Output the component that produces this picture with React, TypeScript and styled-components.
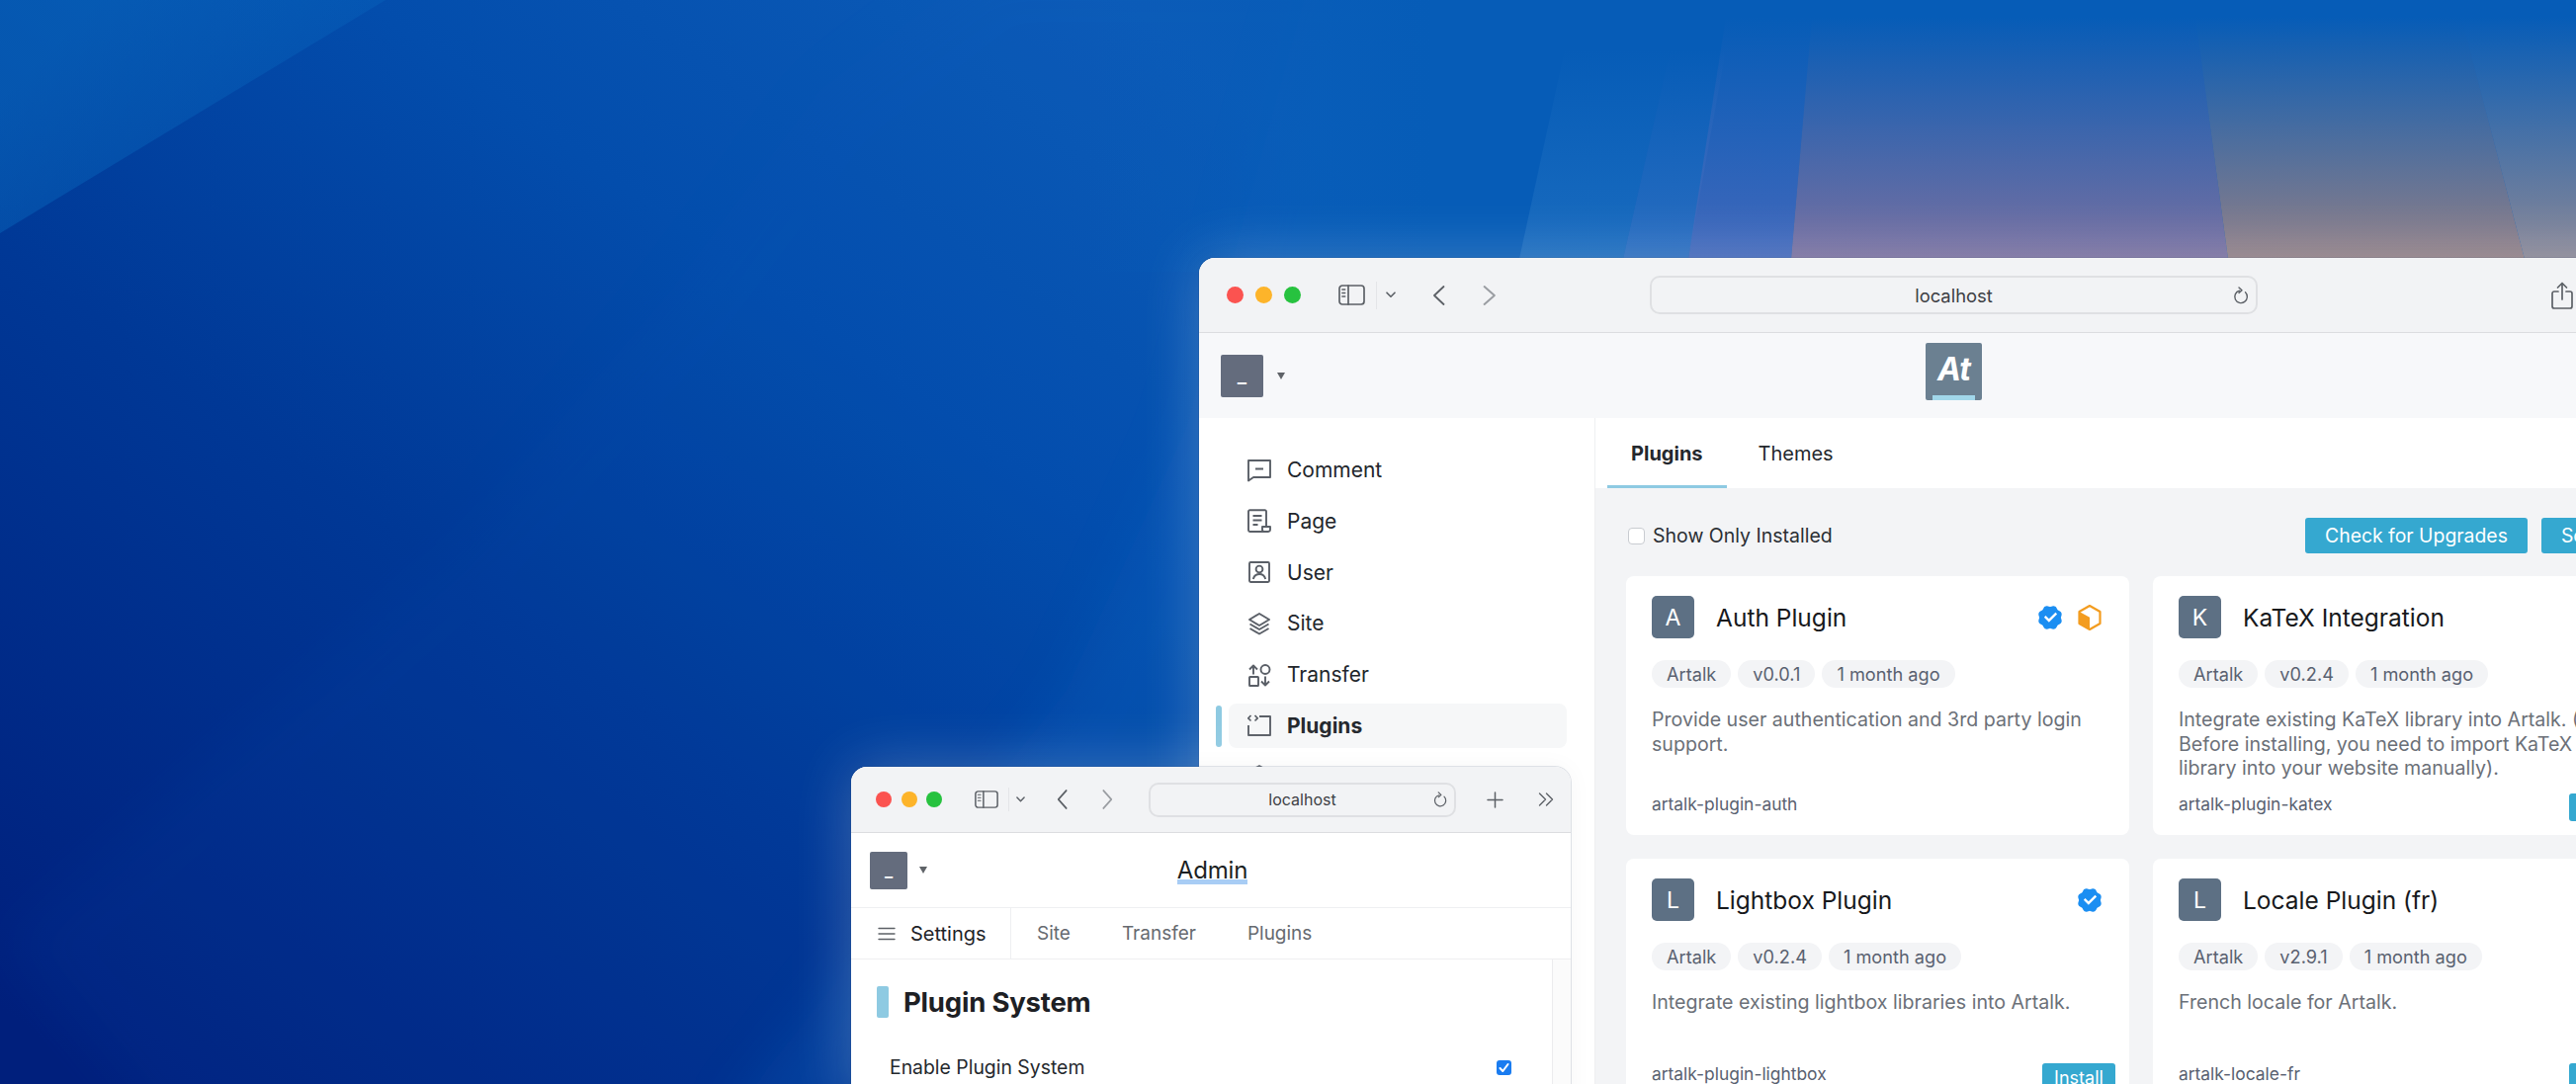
import React from 'react';
import styled, { createGlobalStyle } from 'styled-components';
import { RiVerifiedBadgeFill } from 'react-icons/ri';

const Global = createGlobalStyle`
  html, body { margin: 0; padding: 0; overflow: hidden; background: #0a50ae; }
  * { box-sizing: border-box; }
  body { font-family: Inter, "Noto Sans", "Liberation Sans", sans-serif; color: #1f2328; }
`;

const Desktop = styled.div`
  position: relative;
  width: 2606px;
  height: 1097px;
  overflow: hidden;
`;
const Wallpaper = styled.svg`
  position: absolute;
  inset: 0;
`;
const Win = styled.section<{ $x: number; $y: number; $w: number; $h: number }>`
  position: absolute;
  left: ${p => p.$x}px;
  top: ${p => p.$y}px;
  width: ${p => p.$w}px;
  height: ${p => p.$h}px;
  background: #fff;
  border-radius: 16px 16px 0 0;
  overflow: hidden;
  display: flex;
  flex-direction: column;
  box-shadow: 0 0 0 1px rgba(20, 40, 80, .12), 0 0 60px rgba(255, 255, 255, .24), 0 0 24px rgba(0, 0, 0, .04);
`;
const Toolbar = styled.header<{ $h: number; $pl: number }>`
  height: ${p => p.$h}px;
  padding-left: ${p => p.$pl}px;
  flex: none;
  display: flex;
  align-items: center;
  background: #f2f3f5;
  border-bottom: 1px solid #dcdde0;
`;
const Dots = styled.div<{ $gap: number }>`
  display: flex;
  gap: ${p => p.$gap}px;
`;
const Dot = styled.i<{ $c: string; $d: number }>`
  display: block;
  width: ${p => p.$d}px;
  height: ${p => p.$d}px;
  border-radius: 50%;
  background: ${p => p.$c};
`;
const ToolIcon = styled.svg<{ $ml: number }>`
  flex: none;
  margin-left: ${p => p.$ml}px;
  fill: none;
  stroke: #5c6066;
  stroke-linecap: round;
  stroke-linejoin: round;
`;
const ToolSep = styled.i<{ $ml: number; $h: number }>`
  flex: none;
  width: 1px;
  height: ${p => p.$h}px;
  margin-left: ${p => p.$ml}px;
  background: #e4e5e8;
`;
const UrlBar = styled.div<{ $ml: number; $w: number; $h: number; $fs: number; $pr: number }>`
  position: relative;
  flex: none;
  margin-left: ${p => p.$ml}px;
  width: ${p => p.$w}px;
  height: ${p => p.$h}px;
  padding-right: ${p => p.$pr}px;
  display: flex;
  align-items: center;
  justify-content: flex-end;
  border: 2px solid #dfe0e3;
  border-radius: 10px;
  background: #f2f3f5;
  font-size: ${p => p.$fs}px;
  color: #3d4044;
`;
const UrlText = styled.span`
  position: absolute;
  left: 0;
  right: 0;
  text-align: center;
`;
const BigHeader = styled.div`
  height: 86px;
  flex: none;
  display: grid;
  grid-template-columns: 1fr auto 1fr;
  align-items: center;
  padding: 0 24px 0 22px;
  background: #f7f8fa;
`;
const SmallHeader = styled.div`
  height: 76px;
  flex: none;
  display: grid;
  grid-template-columns: 1fr auto 1fr;
  align-items: center;
  padding-left: 19px;
  padding-right: 16px;
  border-bottom: 1px solid #eeeff1;
`;
const UserBox = styled.div`
  display: flex;
  align-items: center;
`;
const UserAvatar = styled.div<{ $s: number }>`
  width: ${p => p.$s}px;
  height: ${p => p.$s}px;
  border-radius: 2px;
  background: #646c7d;
  color: #fff;
  font-size: ${p => p.$s * 0.46}px;
  font-weight: 600;
  display: flex;
  align-items: center;
  justify-content: center;
`;
const Caret = styled.span<{ $ml: number }>`
  margin-left: ${p => p.$ml}px;
  width: 0;
  height: 0;
  border-left: 4px solid transparent;
  border-right: 4px solid transparent;
  border-top: 7px solid #5f6368;
`;
const Logo = styled.div`
  position: relative;
  width: 57px;
  height: 58px;
  margin-bottom: 8px;
  border-radius: 2px;
  background: #6b8091;
  color: #fff;
  font-size: 32px;
  font-weight: 700;
  font-style: italic;
  letter-spacing: -1px;
  display: flex;
  align-items: center;
  justify-content: center;
  padding-bottom: 5px;
  &::after {
    content: '';
    position: absolute;
    left: 7px;
    right: 7px;
    bottom: 0;
    height: 5px;
    background: #a1d7ea;
  }
`;
const AdminTitle = styled.h1`
  margin: 0;
  font-size: 24px;
  font-weight: 400;
  line-height: 30px;
  letter-spacing: -.2px;
  color: #1c1f23;
  background: linear-gradient(#a8cdf5, #a8cdf5) 0 24px / 100% 5px no-repeat;
`;
const Body = styled.div`
  flex: 1;
  min-height: 0;
  display: flex;
`;
const Sidebar = styled.nav`
  width: 401px;
  flex: none;
  padding: 30px 0 0 30px;
  display: flex;
  flex-direction: column;
  gap: 6.8px;
  border-right: 1px solid #eeeff1;
`;
const NavRow = styled.a<{ $on?: boolean }>`
  position: relative;
  width: 342px;
  height: 45px;
  padding-left: 19px;
  display: flex;
  align-items: center;
  gap: 16px;
  flex: none;
  border-radius: 8px;
  font-size: 21px;
  font-weight: ${p => (p.$on ? 700 : 400)};
  color: #22262b;
  background: ${p => (p.$on ? '#f6f7f8' : 'transparent')};
  ${p => p.$on && `
    &::before {
      content: '';
      position: absolute;
      left: -13px;
      top: 2px;
      width: 6px;
      height: 42px;
      border-radius: 3px;
      background: #8ecae2;
    }
  `}
`;
const NavIcon = styled.svg`
  width: 24px;
  height: 24px;
  flex: none;
  fill: none;
  stroke: #5a5f67;
  stroke-width: 1.9;
  stroke-linejoin: round;
`;
const Main = styled.main`
  flex: 1;
  background: #f3f4f6;
  min-width: 0;
`;
const TabBar = styled.div`
  height: 71px;
  padding-left: 12px;
  display: flex;
  gap: 8px;
  background: #fff;
`;
const Tab = styled.a<{ $on?: boolean }>`
  padding: 3px 24px 0;
  display: flex;
  align-items: center;
  font-size: 20px;
  font-weight: ${p => (p.$on ? 700 : 400)};
  color: #24282d;
  border-bottom: 3px solid ${p => (p.$on ? '#8ecae2' : 'transparent')};
`;
const FilterRow = styled.div`
  margin-top: 30px;
  padding-left: 33px;
  height: 36px;
  display: flex;
  align-items: center;
`;
const CheckBox = styled.i`
  flex: none;
  width: 17px;
  height: 17px;
  border: 1.5px solid #c9ccd1;
  border-radius: 4px;
  background: #fff;
`;
const FilterLabel = styled.label`
  width: 181px;
  margin-left: 8px;
  font-size: 19.5px;
  color: #2a2e33;
  white-space: nowrap;
`;
const Btn = styled.button<{ $ml?: number }>`
  flex: none;
  margin-left: ${p => p.$ml ?? 0}px;
  height: 36px;
  padding: 0 20px;
  border: 0;
  border-radius: 3px;
  background: #35a8d0;
  color: #fff;
  font: 400 19.4px Inter, sans-serif;
  white-space: nowrap;
`;
const Grid = styled.div`
  margin-top: 23px;
  padding-left: 31px;
  display: grid;
  grid-template-columns: 509px 509px;
  grid-template-rows: 262px 249px;
  gap: 24px;
`;
const Card = styled.article`
  padding: 20px 14px 14px 26px;
  display: flex;
  flex-direction: column;
  background: #fff;
  border-radius: 8px;
`;
const CardHead = styled.div`
  height: 43px;
  padding-right: 14px;
  display: flex;
  align-items: center;
`;
const Letter = styled.div`
  width: 43px;
  height: 43px;
  flex: none;
  border-radius: 5px;
  background: #5d7084;
  color: #fff;
  font-size: 23px;
  display: flex;
  align-items: center;
  justify-content: center;
`;
const CardTitle = styled.h3`
  margin: 0 0 0 22px;
  font-size: 24.5px;
  font-weight: 400;
  color: #17191c;
  white-space: nowrap;
`;
const Badges = styled.div`
  margin-left: auto;
  display: flex;
  align-items: center;
  gap: 16px;
`;
const Verified = styled(RiVerifiedBadgeFill)`
  width: 28px;
  height: 28px;
  color: #1b8ef2;
  margin: 0 -2px;
  display: block;
`;
const Pills = styled.div`
  margin-top: 22px;
  display: flex;
  gap: 7px;
`;
const Pill = styled.span`
  height: 28px;
  padding: 0 15px;
  border-radius: 14px;
  background: #f3f4f6;
  color: #596170;
  font-size: 18.2px;
  line-height: 28px;
  white-space: nowrap;
`;
const Desc = styled.p`
  margin: 20px 0 0;
  padding-right: 20px;
  font-size: 19.6px;
  line-height: 24.5px;
  color: #6b7078;
`;
const CardFoot = styled.div`
  margin-top: auto;
  height: 28px;
  display: flex;
  justify-content: space-between;
  align-items: flex-start;
`;
const Slug = styled.span`
  font-size: 17.4px;
  line-height: 22px;
  color: #596170;
`;
const Install = styled.button`
  width: 74px;
  height: 28px;
  padding: 0;
  border: 0;
  border-radius: 3px;
  background: #35a8d0;
  color: #fff;
  font: 400 18px Inter, sans-serif;
`;
const SmallTabs = styled.div`
  height: 52px;
  flex: none;
  display: flex;
  align-items: center;
  border-bottom: 1px solid #eeeff1;
  font-size: 19px;
`;
const MenuCell = styled.div`
  width: 162px;
  height: 100%;
  padding-left: 27px;
  display: flex;
  align-items: center;
  gap: 15px;
  flex: none;
  border-right: 1px solid #eeeff1;
  color: #1f2328;
  font-size: 20px;
`;
const SmallTabLinks = styled.div`
  margin-left: 26px;
  display: flex;
  gap: 52px;
  color: #666a70;
`;
const Panel = styled.div`
  flex: 1;
  padding: 26px 41px 0 26px;
`;
const PanelTitle = styled.div`
  display: flex;
  align-items: center;
  gap: 15px;
`;
const TitleBar = styled.i`
  width: 12px;
  height: 32px;
  border-radius: 2px;
  background: #8ecae2;
`;
const TitleText = styled.h2`
  margin: 0;
  font-size: 27.5px;
  font-weight: 700;
  letter-spacing: -.2px;
  color: #1d2024;
`;
const SettingRow = styled.div`
  margin-top: 34px;
  height: 30px;
  padding-left: 13px;
  display: flex;
  align-items: center;
  justify-content: space-between;
  font-size: 19.4px;
  color: #24282d;
`;
const Checked = styled.i`
  width: 15px;
  height: 15px;
  border-radius: 3px;
  background: #1a7cf0;
  display: flex;
  align-items: center;
  justify-content: center;
`;
const ScrollTrack = styled.div`
  width: 19px;
  flex: none;
  background: #fbfbfb;
  border-left: 1px solid #ececee;
`;

const SidebarGlyph = ({ ml, w, h }: { ml: number; w: number; h: number }) => (
  <ToolIcon $ml={ml} width={w} height={h} viewBox="0 0 27 21" preserveAspectRatio="none" strokeWidth={1.7}>
    <rect x="1" y="1" width="25" height="19" rx="3" />
    <path d="M10 1v19" />
    <path d="M3.8 5h3M3.8 8.5h3M3.8 12h3" strokeWidth={1.3} />
  </ToolIcon>
);
const Chevron = ({ ml, w }: { ml: number; w: number }) => (
  <ToolIcon $ml={ml} width={w} height={w * 0.7} viewBox="0 0 10 7" strokeWidth={1.6}>
    <path d="M1 1.2l4 4 4-4" />
  </ToolIcon>
);
const Back = ({ ml, w, h }: { ml: number; w: number; h: number }) => (
  <ToolIcon $ml={ml} width={w} height={h} viewBox="0 0 13 20" preserveAspectRatio="none" strokeWidth={1.8}>
    <path d="M11.5 1L2 10l9.5 9" />
  </ToolIcon>
);
const Forward = ({ ml, w, h }: { ml: number; w: number; h: number }) => (
  <ToolIcon $ml={ml} width={w} height={h} viewBox="0 0 13 20" preserveAspectRatio="none" strokeWidth={1.8} style={{ stroke: '#9a9da2' }}>
    <path d="M1.5 1L11 10l-9.5 9" />
  </ToolIcon>
);
const Reload = ({ s }: { s: number }) => (
  <ToolIcon $ml={0} width={s} height={s} viewBox="0 0 16 18" strokeWidth={1.4}>
    <path d="M6.5 4.2a6.3 6.3 0 1 0 6 1.6" />
    <path d="M6 1l3 2.8-3 2.6" />
  </ToolIcon>
);

const CommentIcon = () => (
  <NavIcon viewBox="0 0 24 24">
    <path d="M1 2h22v17H6l-5 3.5z" />
    <path d="M8 10.5h8" />
  </NavIcon>
);
const PageIcon = () => (
  <NavIcon viewBox="0 0 24 24">
    <path d="M19 18V2.6a1.4 1.4 0 0 0-1.4-1.4H2.4A1.4 1.4 0 0 0 1 2.6v19a1.4 1.4 0 0 0 1.4 1.4H21a2.2 2.2 0 0 0 2-2.2V18h-8v3a2 2 0 0 0 2 2" />
    <path d="M5.5 7h9M5.5 11.5h9M5.5 16h5" />
  </NavIcon>
);
const UserIcon = () => (
  <NavIcon viewBox="0 0 24 24">
    <rect x="2" y="2" width="20" height="20" rx="1.2" />
    <circle cx="12" cy="9" r="3.4" />
    <path d="M5.8 19c.8-3.4 3.2-5 6.2-5s5.4 1.6 6.2 5" />
  </NavIcon>
);
const SiteIcon = () => (
  <NavIcon viewBox="0 0 24 24">
    <path d="M12 2l10 6-10 6L2 8z" />
    <path d="M2.5 12.5L12 18l9.5-5.500M2.500 17L12 22.500 21.500 17" />
  </NavIcon>
);
const TransferIcon = () => (
  <NavIcon viewBox="0 0 24 24">
    <path d="M6 11.500V3M2 6.500L6 2.500l4 4" />
    <circle cx="18" cy="6.500" r="4.500" />
    <rect x="2" y="14" width="9" height="9" rx=".6" />
    <path d="M18 13.500V22M14 18.500l4 4 4-4" />
  </NavIcon>
);
const PluginIcon = () => (
  <NavIcon viewBox="0 0 24 24">
    <path d="M12 3h11v19H1V12" />
    <path d="M3.500 2L0.800 4.800 3.500 7.500M7.500 2l2.700 2.800-2.700 2.700" strokeWidth={1.700} />
  </NavIcon>
);
const SettingsIcon = () => (
  <NavIcon viewBox="0 0 24 24">
    <path d="M12 1l9.500 5.500v11L12 23l-9.500-5.500v-11z" />
    <circle cx="12" cy="12" r="3.500" />
  </NavIcon>
);
const Cube = () => (
  <svg width="24" height="26" viewBox="0 0 24 26">
    <path d="M12 1l10.500 6v12L12 25 1.500 19V7z" fill="#fff" stroke="#f39c1f" strokeWidth="2.200" strokeLinejoin="round" />
    <path d="M2 7.300l10 5.500V25L2 19z" fill="#f39c1f" />
  </svg>
);
const CheckMark = () => (
  <svg width="11" height="11" viewBox="0 0 11 11" fill="none" stroke="#fff" strokeWidth="2" strokeLinecap="round" strokeLinejoin="round">
    <path d="M1.500 6l2.800 3 5.200-7" />
  </svg>
);

const ray = (id: string, color: string, peak: number) => (
  <linearGradient id={id} x1="0" y1="0" x2="0" y2="1">
    <stop offset="0" stopColor={color} stopOpacity="0" />
    <stop offset="1" stopColor={color} stopOpacity={peak} />
  </linearGradient>
);

const WallpaperArt = () => (
  <Wallpaper width="2606" height="1097" viewBox="0 0 2606 1097">
    <defs>
      <linearGradient id="base" gradientUnits="userSpaceOnUse" x1="1050" y1="-60" x2="180" y2="1150">
        <stop offset="0" stopColor="#0c5cb8" />
        <stop offset=".3" stopColor="#034dac" />
        <stop offset=".58" stopColor="#003896" />
        <stop offset="1" stopColor="#001f7c" />
      </linearGradient>
      <linearGradient id="wedge" gradientUnits="userSpaceOnUse" x1="60" y1="40" x2="220" y2="200">
        <stop offset="0" stopColor="#0a6ec2" stopOpacity=".5" />
        <stop offset="1" stopColor="#0a74c8" stopOpacity=".2" />
      </linearGradient>
      <linearGradient id="fade" gradientUnits="userSpaceOnUse" x1="1100" y1="0" x2="1450" y2="0">
        <stop offset="0" stopColor="#065cb7" stopOpacity="0" />
        <stop offset="1" stopColor="#065cb7" />
      </linearGradient>
      <filter id="soft" x="-10%" y="-10%" width="120%" height="120%">
        <feGaussianBlur stdDeviation="26" />
      </filter>
      {ray('r1', '#2272c2', 0.7)}
      {ray('r2', '#3070c2', 0.85)}
      {ray('r3', '#4268bb', 1)}
      {ray('r4', '#7970a0', 1)}
      {ray('r5', '#917f86', 1)}
      {ray('r6', '#8a8796', 1)}
    </defs>
    <rect width="2606" height="1097" fill="url(#base)" />
    <polygon points="0,951 464,545 680,293 830,91 1000,-40 2700,-40 2700,1200 200,1200" fill="#0858bc" opacity=".08" filter="url(#soft)" />
    <polygon points="730,1140 1078,700 1200,433 1330,-40 2700,-40 2700,1140" fill="#0868c4" opacity=".25" filter="url(#soft)" />
    <polygon points="0,236 390,0 0,0" fill="url(#wedge)" />
    <rect x="1100" width="1506" height="275" fill="url(#fade)" />
    <polygon points="1583,50 1690,50 1642,262 1537,262" fill="url(#r1)" />
    <polygon points="1690,50 1746,50 1708,262 1642,262" fill="url(#r2)" />
    <polygon points="1746,17 1833,17 1812,262 1708,262" fill="url(#r3)" />
    <polygon points="1833,17 2221,17 2254,262 1812,262" fill="url(#r4)" />
    <polygon points="2221,17 2490,17 2554,262 2254,262" fill="url(#r5)" />
    <polygon points="2490,17 2606,17 2606,262 2554,262" fill="url(#r6)" />
  </Wallpaper>
);

const plugins = [
  { l: 'A', t: 'Auth Plugin', v: 'v0.0.1', d: 'Provide user authentication and 3rd party login support.', s: 'artalk-plugin-auth', cube: true },
  { l: 'K', t: 'KaTeX Integration', v: 'v0.2.4', d: 'Integrate existing KaTeX library into Artalk. ( Before installing, you need to import KaTeX library into your website manually).', s: 'artalk-plugin-katex', install: true },
  { l: 'L', t: 'Lightbox Plugin', v: 'v0.2.4', d: 'Integrate existing lightbox libraries into Artalk.', s: 'artalk-plugin-lightbox', install: true },
  { l: 'L', t: 'Locale Plugin (fr)', v: 'v2.9.1', d: 'French locale for Artalk.', s: 'artalk-locale-fr', install: true },
];

const navItems = [
  { n: 'Comment', i: <CommentIcon /> },
  { n: 'Page', i: <PageIcon /> },
  { n: 'User', i: <UserIcon /> },
  { n: 'Site', i: <SiteIcon /> },
  { n: 'Transfer', i: <TransferIcon /> },
  { n: 'Plugins', i: <PluginIcon />, on: true },
  { n: '', i: <SettingsIcon /> },
];

export default function App() {
  return (
    <Desktop>
      <Global />
      <WallpaperArt />
      <Win $x={1213} $y={261} $w={1529} $h={880}>
        <Toolbar $h={76} $pl={28}>
          <Dots $gap={12}>
            <Dot $d={17} $c="#fb5350" />
            <Dot $d={17} $c="#fdb42a" />
            <Dot $d={17} $c="#27c23f" />
          </Dots>
          <SidebarGlyph ml={38} w={27} h={21} />
          <ToolSep $ml={11} $h={28} />
          <Chevron ml={9} w={10} />
          <Back ml={37} w={13} h={20} />
          <Forward ml={38} w={14} h={20} />
          <UrlBar $ml={155} $w={615} $h={39} $fs={18.4} $pr={6}>
            <UrlText>localhost</UrlText>
            <Reload s={18} />
          </UrlBar>
          <ToolIcon $ml={297} width={22} height={28} viewBox="0 0 22 28" strokeWidth={1.7}>
            <path d="M7 10H3a2 2 0 0 0-2 2v13a2 2 0 0 0 2 2h16a2 2 0 0 0 2-2V12a2 2 0 0 0-2-2h-4" />
            <path d="M11 18V2M6.500 6L11 1.500 15.500 6" />
          </ToolIcon>
        </Toolbar>
        <BigHeader>
          <UserBox>
            <UserAvatar $s={43}>_</UserAvatar>
            <Caret $ml={14} />
          </UserBox>
          <Logo>At</Logo>
        </BigHeader>
        <Body>
          <Sidebar>
            {navItems.map(n => (
              <NavRow key={n.n} $on={n.on}>
                {n.i}
                {n.n}
              </NavRow>
            ))}
          </Sidebar>
          <Main>
            <TabBar>
              <Tab $on>Plugins</Tab>
              <Tab>Themes</Tab>
            </TabBar>
            <FilterRow>
              <CheckBox />
              <FilterLabel>Show Only Installed</FilterLabel>
              <Btn $ml={479}>Check for Upgrades</Btn>
              <Btn $ml={14}>Source Manager</Btn>
            </FilterRow>
            <Grid>
              {plugins.map(p => (
                <Card key={p.s}>
                  <CardHead>
                    <Letter>{p.l}</Letter>
                    <CardTitle>{p.t}</CardTitle>
                    <Badges>
                      <Verified />
                      {p.cube && <Cube />}
                    </Badges>
                  </CardHead>
                  <Pills>
                    <Pill>Artalk</Pill>
                    <Pill>{p.v}</Pill>
                    <Pill>1 month ago</Pill>
                  </Pills>
                  <Desc>{p.d}</Desc>
                  <CardFoot>
                    <Slug>{p.s}</Slug>
                    {p.install && <Install>Install</Install>}
                  </CardFoot>
                </Card>
              ))}
            </Grid>
          </Main>
        </Body>
      </Win>
      <Win $x={861} $y={776} $w={728} $h={340}>
        <Toolbar $h={67} $pl={25}>
          <Dots $gap={9.5}>
            <Dot $d={16} $c="#fb5350" />
            <Dot $d={16} $c="#fdb42a" />
            <Dot $d={16} $c="#27c23f" />
          </Dots>
          <SidebarGlyph ml={33} w={24} h={18} />
          <ToolSep $ml={10} $h={24} />
          <Chevron ml={7} w={9} />
          <Back ml={32} w={11} h={20} />
          <Forward ml={35} w={11} h={20} />
          <UrlBar $ml={36} $w={311} $h={35} $fs={16} $pr={6}>
            <UrlText>localhost</UrlText>
            <Reload s={16} />
          </UrlBar>
          <ToolIcon $ml={31} width={17} height={17} viewBox="0 0 17 17" strokeWidth={1.5}>
            <path d="M8.500 1v15M1 8.500h15" />
          </ToolIcon>
          <ToolIcon $ml={35} width={16} height={14} viewBox="0 0 16 14" strokeWidth={1.4}>
            <path d="M1.500 1l6 6-6 6M8.500 1l6 6-6 6" />
          </ToolIcon>
        </Toolbar>
        <SmallHeader>
          <UserBox>
            <UserAvatar $s={38}>_</UserAvatar>
            <Caret $ml={12} />
          </UserBox>
          <AdminTitle>Admin</AdminTitle>
        </SmallHeader>
        <SmallTabs>
          <MenuCell>
            <ToolIcon $ml={0} width={18} height={14} viewBox="0 0 18 14" strokeWidth={1.4}>
              <path d="M1 1.500h16M1 7h16M1 12.500h16" />
            </ToolIcon>
            Settings
          </MenuCell>
          <SmallTabLinks>
            <span>Site</span>
            <span>Transfer</span>
            <span>Plugins</span>
          </SmallTabLinks>
        </SmallTabs>
        <Body>
          <Panel>
            <PanelTitle>
              <TitleBar />
              <TitleText>Plugin System</TitleText>
            </PanelTitle>
            <SettingRow>
              Enable Plugin System
              <Checked>
                <CheckMark />
              </Checked>
            </SettingRow>
          </Panel>
          <ScrollTrack />
        </Body>
      </Win>
    </Desktop>
  );
}
